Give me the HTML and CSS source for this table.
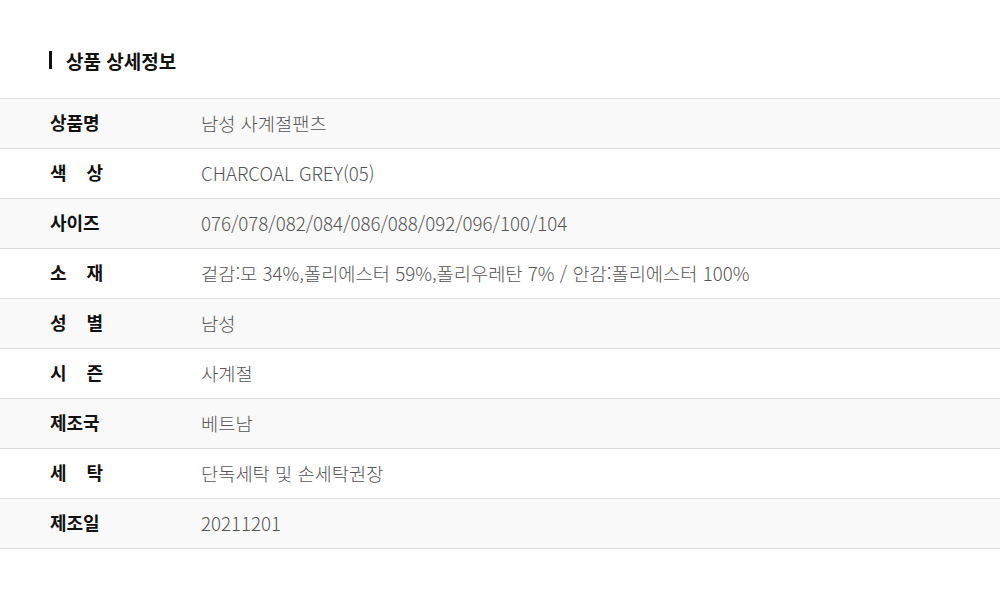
FILE: index.html
```html
<!DOCTYPE html>
<html lang="ko">
<head>
    <meta charset="UTF-8">
    <meta name="viewport" content="width=device-width, initial-scale=1.0">
    <title>상품 상세정보</title>
    <link rel="stylesheet" href="styles.css">
</head>
<body>
    <div class="detail">
        <h2 class="detail-title">상품 상세정보</h2>

        <table class="detail-table">
            <tr>
                <th><span class="label">상품명</span></th>
                <td>남성 사계절팬츠</td>
            </tr>
            <tr>
                <th><span class="label">색 상</span></th>
                <td>CHARCOAL GREY(05)</td>
            </tr>
            <tr>
                <th><span class="label">사이즈</span></th>
                <td>076/078/082/084/086/088/092/096/100/104</td>
            </tr>
            <tr>
                <th><span class="label">소 재</span></th>
                <td>겉감:모 34%,폴리에스터 59%,폴리우레탄 7% / 안감:폴리에스터 100%</td>
            </tr>
            <tr>
                <th><span class="label">성 별</span></th>
                <td>남성</td>
            </tr>
            <tr>
                <th><span class="label">시 즌</span></th>
                <td>사계절</td>
            </tr>
            <tr>
                <th><span class="label">제조국</span></th>
                <td>베트남</td>
            </tr>
            <tr>
                <th><span class="label">세 탁</span></th>
                <td>단독세탁 및 손세탁권장</td>
            </tr>
            <tr>
                <th><span class="label">제조일</span></th>
                <td>20211201</td>
            </tr>
        </table>
    </div>
</body>
</html>
```

FILE: styles.css
```css
* {
    margin: 0;
    padding: 0;
    box-sizing: border-box;
}
body {
    background-color: #ffffff;
    font-family: 'Noto Sans CJK KR', 'Noto Sans', sans-serif;
    color: #111;
}
.detail {
    padding-top: 48px;
}
.detail-title {
    display: flex;
    align-items: center;
    height: 24px;
    margin-left: 49px;
    margin-bottom: 26px;
    font-size: 19px;
    font-weight: 700;
    color: #111;
}
.detail-title::before {
    content: "";
    width: 3px;
    height: 18px;
    background: #111;
    margin-right: 14px;
}
.detail-table {
    width: 100%;
    border-collapse: collapse;
    border-top: 1px solid #dcdcdc;
}
.detail-table tr {
    height: 50px;
    border-bottom: 1px solid #dcdcdc;
}
.detail-table tr:nth-child(odd) {
    background: #f9f9f9;
}
.detail-table th {
    width: 201px;
    padding-left: 50px;
    padding-bottom: 3px;
    text-align: left;
    vertical-align: middle;
}
.label {
    display: block;
    width: 53px;
    font-size: 18px;
    font-weight: 700;
    color: #111;
    text-align: justify;
    text-align-last: justify;
}
.detail-table td {
    padding-bottom: 3px;
    font-size: 18.7px;
    font-weight: 300;
    color: #555;
    vertical-align: middle;
}
```
